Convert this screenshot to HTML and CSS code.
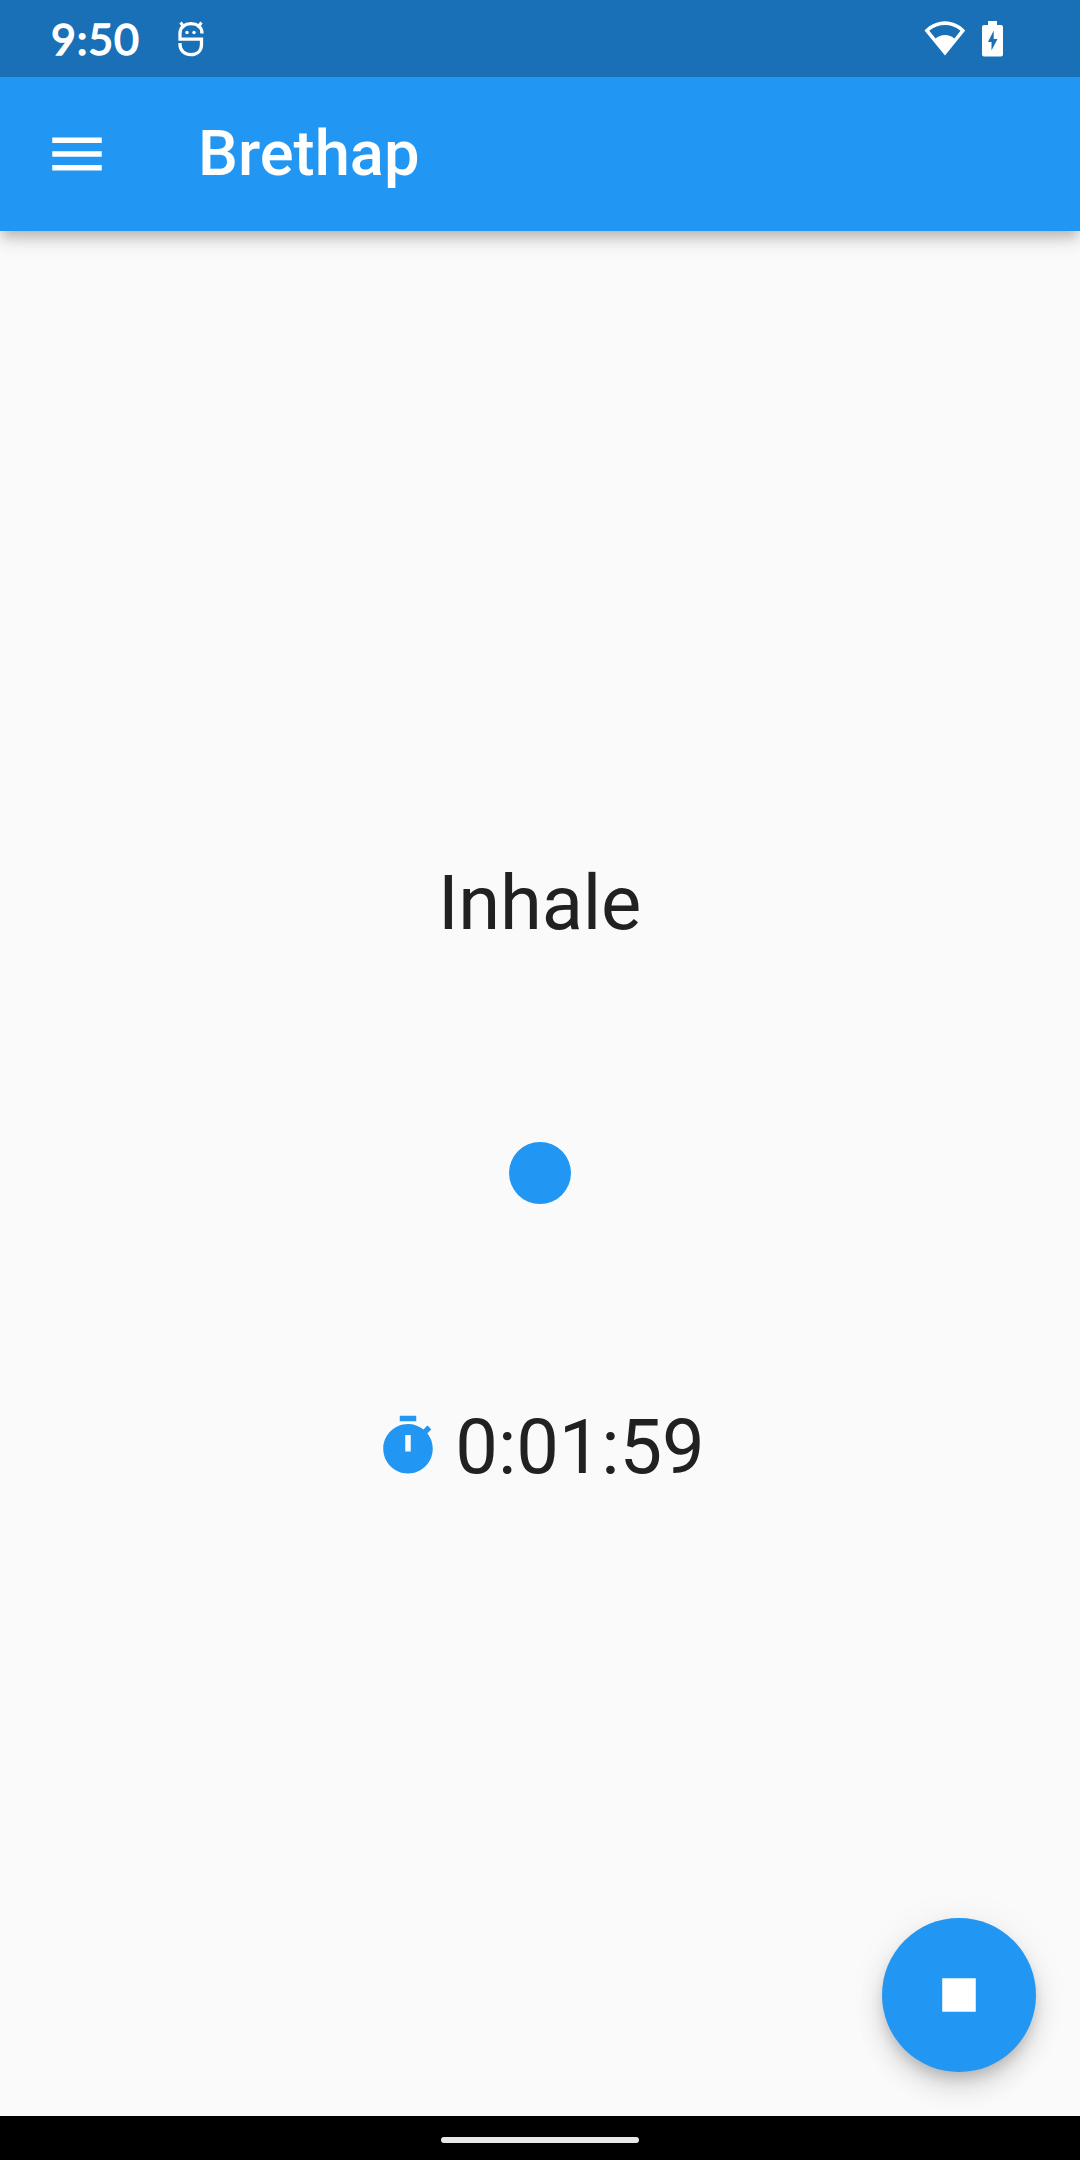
FILE: index.html
```html
<!DOCTYPE html>
<html lang="en">
<head>
<meta charset="utf-8">
<title>Brethap</title>
<link rel="stylesheet" href="styles.css">
</head>
<body>
<div class="screen">
  <header class="status-bar">
    <span class="clock">9:50</span>
    <svg class="notification" width="26" height="36" viewBox="0 0 26 36" fill="none" stroke="#fff" stroke-width="3.300">
      <path d="M24 12.500C24 5.500 19 2.700 13 2.700S2 5.500 2 12.500v5.700h21.500V23.500c0 6.500-4.500 10.200-10.500 10.200S2 30 2 23.500v-1.500"/>
      <path d="M2.500 1.500l4 5M23.500 1.500l-4 5" stroke-width="3"/>
      <circle cx="9" cy="11.500" r="1.700" fill="#fff" stroke="none"/>
      <circle cx="16" cy="11.500" r="1.700" fill="#fff" stroke="none"/>
    </svg>
    <svg class="wifi" width="42" height="36" viewBox="0 0 42 36">
      <path fill="#fff" fill-rule="evenodd" d="M0.500 9.500C6 3.800 13.500 0.300 21 0.300S36 3.800 41.200 9.500L21 34.500ZM5.300 9.800L11.600 17.600C14 15.300 17.500 14 21 14S28 15.300 30.400 17.600L36.500 9.800C32 6 26.500 4.100 21 4.100S9.500 6 5.300 9.800Z"/>
    </svg>
    <svg class="battery" width="21" height="36" viewBox="0 0 21 36">
      <path fill="#fff" fill-rule="evenodd" d="M6 0h9v4h4a2 2 0 0 1 2 2v27.500a2 2 0 0 1-2 2H2a2 2 0 0 1-2-2V6a2 2 0 0 1 2-2h4ZM11.700 9.500L6 21h3.500v8.500L15.500 18h-3.800Z"/>
    </svg>
  </header>
  <div class="app-bar">
    <svg class="menu" width="66" height="66" viewBox="0 0 24 24"><path fill="#fff" d="M3 18h18v-2H3v2zm0-5h18v-2H3v2zm0-7v2h18V6H3z"/></svg>
    <h1 class="title">Brethap</h1>
  </div>
  <main class="content">
    <div class="phase">Inhale</div>
    <div class="breath"></div>
    <div class="timer">
      <svg width="66" height="66" viewBox="0 0 24 24"><path fill="#2196f3" fill-rule="evenodd" d="M15 1H9v2h6V1zm-4 13h2V8h-2v6zm8.030-6.610l1.420-1.420c-.43-.51-.9-.99-1.410-1.410l-1.420 1.420C16.070 4.740 14.120 4 12 4c-4.970 0-9 4.030-9 9s4.020 9 9 9 9-4.030 9-9c0-2.120-.74-4.070-1.970-5.610z"/></svg>
      <span class="time">0:01:59</span>
    </div>
    <button class="stop" aria-label="Stop"><svg width="66" height="66" viewBox="0 0 24 24"><path fill="#fff" d="M5.900 5.900h12.200v12.200H5.900z"/></svg></button>
  </main>
  <footer class="nav-bar"><div class="handle"></div></footer>
</div>
</body>
</html>
```
FILE: styles.css
```css
* { box-sizing: border-box; }
body { margin: 0; font-family: Roboto, sans-serif; background: #fafafa; }
.screen { display: flex; flex-direction: column; height: 2160px; overflow: hidden; }
.status-bar { position: relative; z-index: 2; height: 77px; flex: none; display: flex; align-items: center; background: #1a70b7; padding: 0 77px 0 51px; }
.clock { width: 127px; font: 400 43px/77px Lato, sans-serif; letter-spacing: .8px; color: #fff; -webkit-text-stroke: 1.500px #fff; }
.wifi { margin-left: auto; }
.battery { margin-left: 16px; }
.app-bar { position: relative; z-index: 1; height: 154px; flex: none; display: flex; align-items: center; padding-left: 44px; background: #2196f3; box-shadow: 0 5.500px 11px -2.750px rgba(0,0,0,.18), 0 11px 14px 0 rgba(0,0,0,.1), 0 3px 27px 0 rgba(0,0,0,.07); }
.title { margin: 0 0 2px 88px; font-size: 63.250px; font-weight: 500; line-height: 74px; color: #fff; }
.content { position: relative; flex: 1; display: flex; flex-direction: column; align-items: center; justify-content: center; gap: 194px; padding-top: 2px; font-size: 75.900px; line-height: 89px; color: #212121; }
.phase { letter-spacing: -.2px; margin-right: 1px; }
.breath { width: 62px; height: 62px; border-radius: 50%; background: #2196f3; }
.timer { display: flex; align-items: center; gap: 14px; margin-top: 4px; height: 89px; letter-spacing: -.1px; }
.time { padding-top: 2px; }
.stop { position: absolute; right: 44px; bottom: 44px; width: 154px; height: 154px; padding: 0; border: 0; border-radius: 50%; background: #2196f3; display: flex; align-items: center; justify-content: center; box-shadow: 0 8px 14px -3px rgba(0,0,0,.18), 0 16px 27px 0 rgba(0,0,0,.12), 0 3px 40px 0 rgba(0,0,0,.06); }
.nav-bar { position: relative; z-index: 1; height: 44px; flex: none; display: flex; align-items: center; justify-content: center; background: #000; padding-top: 4px; }
.handle { width: 198px; height: 6px; border-radius: 3px; background: #e8e8e8; }
```
